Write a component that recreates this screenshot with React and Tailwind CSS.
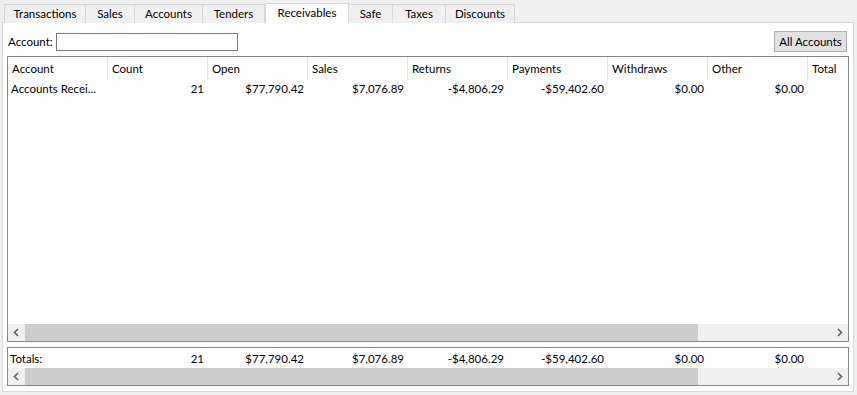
import React from "react";

const tabs = [
    { label: "Transactions", w: "w-[82px]" },
    { label: "Sales", w: "w-[49px]" },
    { label: "Accounts", w: "w-[68px]" },
    { label: "Tenders", w: "w-[62px]" },
    { label: "Receivables", w: "w-[84px]", active: true },
    { label: "Safe", w: "w-[44px]" },
    { label: "Taxes", w: "w-[53px]" },
    { label: "Discounts", w: "w-[69px]" },
];

const columns = ["Account", "Count", "Open", "Sales", "Returns", "Payments", "Withdraws", "Other", "Total"];

const row = ["Accounts Recei...", "21", "$77,790.42", "$7,076.89", "-$4,806.29", "-$59,402.60", "$0.00", "$0.00"];
const totals = ["Totals:", "21", "$77,790.42", "$7,076.89", "-$4,806.29", "-$59,402.60", "$0.00", "$0.00"];

const ScrollBar = () => (
    <div className="flex h-[17px] bg-[#f0f0f0]">
        <div className="w-[17px] flex items-center justify-center">
            <svg width="7" height="9" viewBox="0 0 7 9">
                <path d="M5 1 L1.5 4.5 L5 8" stroke="#606060" strokeWidth="1.6" fill="none" />
            </svg>
        </div>
        <div className="w-[673px] bg-[#cdcdcd]" />
        <div className="flex-1" />
        <div className="w-[17px] flex items-center justify-center">
            <svg width="7" height="9" viewBox="0 0 7 9">
                <path d="M2 1 L5.5 4.5 L2 8" stroke="#606060" strokeWidth="1.6" fill="none" />
            </svg>
        </div>
    </div>
);

const Cells = ({ values, first }) => (
    <div className="flex h-[17px] items-center">
        {values.map((v, i) => (
            <div
                key={i}
                className={`w-[100px] shrink-0 px-[4px] whitespace-nowrap leading-[17px] ${i === 0 ? first : "text-right"}`}
            >
                {v}
            </div>
        ))}
    </div>
);

export default function App() {
    return (
        <div className="w-[857px] h-[395px] bg-[#f0f0f0] text-[11.5px] text-black font-['Lato',sans-serif] leading-[16px] overflow-hidden">
            {/* tab strip */}
            <div className="flex items-end h-[23px] pl-[4px]">
                {tabs.map((t) =>
                    t.active ? (
                        <div
                            key={t.label}
                            className={`${t.w} h-[21px] bg-white border border-b-0 border-[#d9d9d9] -mb-px relative z-10 flex items-center justify-center pb-[2px]`}
                        >
                            {t.label}
                        </div>
                    ) : (
                        <div
                            key={t.label}
                            className={`${t.w} h-[19px] bg-[#f0f0f0] border-t border-r border-[#d9d9d9] first:border-l flex items-center justify-center`}
                        >
                            {t.label}
                        </div>
                    )
                )}
            </div>

            {/* panel */}
            <div className="ml-[2px] w-[852px] mt-[-1px] h-[370px] bg-white border border-[#d9d9d9] flex flex-col">
                <div className="flex items-center justify-between pl-[5px] pr-[6px] pt-[5px] h-[32px]">
                    <div className="flex items-center">
                        <span className="w-[48px] whitespace-nowrap">Account:</span>
                        <div className="w-[182px] h-[18px] border border-[#7a7a7a] bg-white" />
                    </div>
                    <button className="w-[73px] h-[21px] bg-[#e1e1e1] border border-[#adadad] flex items-center justify-center whitespace-nowrap">
                        All Accounts
                    </button>
                </div>

                <div className="ml-[4px] mr-[4px] mt-[1px] h-[286px] border border-[#828790] flex flex-col">
                    <div className="flex-1 overflow-hidden">
                        <div className="flex h-[23px]">
                            {columns.map((c, i) => (
                                <div
                                    key={c}
                                    className={`w-[100px] shrink-0 pl-[4px] flex items-center ${i < columns.length - 1 ? "border-r border-[#e5e5e5]" : ""}`}
                                >
                                    {c}
                                </div>
                            ))}
                        </div>
                        <Cells values={row} first="text-left pl-[3px]" />
                    </div>
                    <ScrollBar />
                </div>

                <div className="ml-[4px] mr-[4px] mt-[5px] h-[39px] border border-[#828790] flex flex-col">
                    <div className="flex-1 flex items-center">
                        <Cells values={totals} first="text-left pl-[2px]" />
                    </div>
                    <ScrollBar />
                </div>
            </div>
        </div>
    );
}
